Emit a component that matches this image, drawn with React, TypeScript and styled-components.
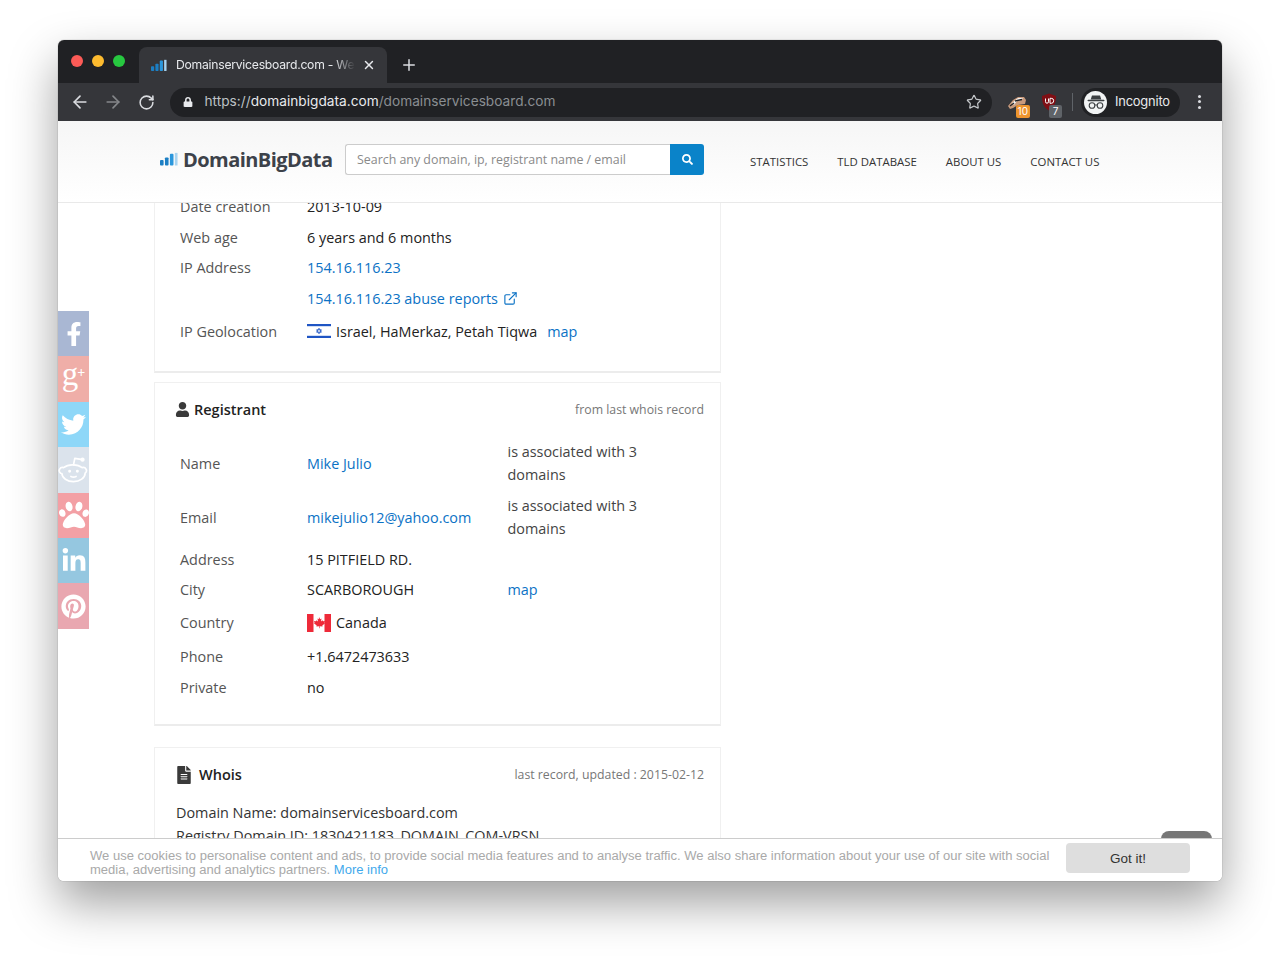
import React from 'react'
import styled, {createGlobalStyle} from 'styled-components'
import {ArrowLeft, ArrowRight, RotateCw, Star, Plus, X, ExternalLink} from 'lucide-react'
import {
    FaFacebookF, FaTwitter, FaPaw, FaLinkedinIn, FaPinterest,
    FaLock, FaSearch, FaUser, FaFileAlt
} from 'react-icons/fa'
import {TbBrandReddit} from 'react-icons/tb'

const GlobalStyle = createGlobalStyle`
  * {
    box-sizing: border-box;
  }

  html, body {
    margin: 0;
    background: #fff;
  }

  a {
    text-decoration: none;
  }
`

const BarsLogo = ({size}: { size: number }) => (
    <svg width={size} height={size * 0.8} viewBox="0 0 20 16">
        <rect x="0" y="9" width="4" height="6" rx="1" fill="#1c7fc4"/>
        <rect x="5.500" y="6" width="4" height="9" rx="1" fill="#1c7fc4"/>
        <rect x="11" y="2" width="4" height="13" rx="1" fill="#2b97dc"/>
        <rect x="16.500" y="1" width="3" height="14" fill="#a9d4f0"/>
    </svg>
)

const IsraelFlag = () => (
    <svg width="24" height="18" viewBox="0 0 24 18">
        <rect width="24" height="18" fill="#fff"/>
        <rect y="2" width="24" height="2.200" fill="#1f55c4"/>
        <rect y="13.800" width="24" height="2.200" fill="#1f55c4"/>
        <path d="M12 6.200l2.400 4H9.600zM12 11.800l-2.400-4h4.800z" fill="none" stroke="#1f55c4" strokeWidth=".8"/>
    </svg>
)

const CanadaFlag = () => (
    <svg width="24" height="18" viewBox="0 0 24 18">
        <rect width="24" height="18" fill="#fff"/>
        <rect width="6.500" height="18" fill="#ee2a39"/>
        <rect x="17.500" width="6.500" height="18" fill="#ee2a39"/>
        <path
            d="M12 3l1.200 2.200 1.300-.6-.5 3 1.600-1.400.4 1 2-.3-.6 2 .7.4-2.800 2.200.3 1.100-2.800-.4v2h-.6v-2l-2.800.4.3-1.100-2.800-2.200.7-.4-.6-2 2 .3.4-1 1.600 1.400-.5-3 1.300.6z"
            fill="#ee2a39"/>
    </svg>
)

const IncognitoFace = () => (
    <svg width="18" height="16" viewBox="0 0 18 16">
        <path d="M5 1.500h8l1.300 4H3.700z" fill="#3c4043"/>
        <rect x="0.500" y="5.800" width="17" height="1.500" rx=".7" fill="#3c4043"/>
        <circle cx="5" cy="11.500" r="2.800" fill="none" stroke="#3c4043" strokeWidth="1.100"/>
        <circle cx="13" cy="11.500" r="2.800" fill="none" stroke="#3c4043" strokeWidth="1.100"/>
        <path d="M7.800 11h2.400" stroke="#3c4043" strokeWidth="1.100"/>
    </svg>
)

const HandIcon = () => (
    <svg width="22" height="18" viewBox="0 0 22 18">
        <path d="M2 13l5-6 5-3 6 0 2 3-1 4-7 1-5 3-3 1z" fill="#c89a7c"/>
        <path d="M6 10l6-5 5 0-2 2-4 1-3 4z" fill="#f4f4f4"/>
        <path d="M9 8l7-1.500" stroke="#202124" strokeWidth="1.400"/>
        <path d="M4 13l4-3" stroke="#202124" strokeWidth="1.200"/>
    </svg>
)

const ShieldIcon = () => (
    <svg width="16" height="18" viewBox="0 0 16 18">
        <path d="M8 .5l7 2.500c0 7-1.500 11-7 14.500C2.500 14 1 10 1 3z" fill="#800f14"/>
        <path d="M4.500 5.500v3.200a1.500 1.500 0 0 0 3 0V5.500M9 5.300v5h1.200a2.500 2.500 0 0 0 0-5z" fill="none" stroke="#fff" strokeWidth="1"/>
    </svg>
)

export default function App() {
    const socials = [
        {color: '#a9b7d3', icon: <FaFacebookF size={24}/>},
        {color: '#efaea8', icon: <GoogleGlyph>g<GooglePlusSign>+</GooglePlusSign></GoogleGlyph>},
        {color: '#8ed7f8', icon: <FaTwitter size={25}/>},
        {color: '#dbe3ec', icon: <TbBrandReddit size={32} strokeWidth={1.300}/>},
        {color: '#f3a0a5', icon: <FaPaw size={30}/>},
        {color: '#95c7e0', icon: <FaLinkedinIn size={26}/>},
        {color: '#e9a7b0', icon: <FaPinterest size={25}/>},
    ]

    return (
        <Page>
            <GlobalStyle/>
            <BrowserWindow>
                <TitleBar>
                    <Lights>
                        <Light $color="#fc5b57"/>
                        <Light $color="#fdbb2f"/>
                        <Light $color="#27c840"/>
                    </Lights>
                    <Tab>
                        <BarsLogo size={16}/>
                        <TabTitle>Domainservicesboard.com - Welcome</TabTitle>
                        <X size={14} strokeWidth={2.500} color="#e8eaed"/>
                    </Tab>
                    <NewTab><Plus size={18} strokeWidth={2} color="#dadce0"/></NewTab>
                </TitleBar>

                <Toolbar>
                    <NavButton><ArrowLeft size={20} strokeWidth={2} color="#dadce0"/></NavButton>
                    <NavButton><ArrowRight size={20} strokeWidth={2} color="#85878a"/></NavButton>
                    <NavButton><RotateCw size={17} strokeWidth={2.200} color="#dadce0"/></NavButton>
                    <Omnibox>
                        <FaLock size={10} color="#e8eaed"/>
                        <UrlText>
                            <UrlScheme>https://</UrlScheme>domainbigdata.com<UrlMuted>/domainservicesboard.com</UrlMuted>
                        </UrlText>
                        <Star size={16} strokeWidth={1.800} color="#c4c7ca"/>
                    </Omnibox>
                    <Extension>
                        <HandIcon/>
                        <ExtensionBadge $color="#ee952e">10</ExtensionBadge>
                    </Extension>
                    <Extension>
                        <ShieldIcon/>
                        <ExtensionBadge $color="#5f6368">7</ExtensionBadge>
                    </Extension>
                    <ToolbarDivider/>
                    <ProfilePill>
                        <ProfileAvatar><IncognitoFace/></ProfileAvatar>
                        <ProfileName>Incognito</ProfileName>
                    </ProfilePill>
                    <MenuDots>
                        <Dot/>
                        <Dot/>
                        <Dot/>
                    </MenuDots>
                </Toolbar>

                <Viewport>
                    <SiteHeader>
                        <LogoBlock>
                            <BarsLogo size={18}/>
                            <LogoText>DomainBigData</LogoText>
                        </LogoBlock>
                        <SearchForm>
                            <SearchField>Search any domain, ip, registrant name / email</SearchField>
                            <SearchButton><FaSearch size={11}/></SearchButton>
                        </SearchForm>
                        <SiteNav>
                            <NavLink>Statistics</NavLink>
                            <NavLink>TLD Database</NavLink>
                            <NavLink>About us</NavLink>
                            <NavLink>Contact us</NavLink>
                        </SiteNav>
                    </SiteHeader>

                    <Scroller>
                        <Card $top={-13} $pad={23}>
                            <DataRow $h={31}><Label>Date creation</Label><Value>2013-10-09</Value></DataRow>
                            <DataRow $h={30}><Label>Web age</Label><Value>6 years and 6 months</Value></DataRow>
                            <DataRow $h={31}><Label>IP Address</Label><LinkValue>154.16.116.23</LinkValue></DataRow>
                            <DataRow $h={31}>
                                <Label/>
                                <LinkValue>154.16.116.23 abuse reports <ExternalLink size={15} strokeWidth={1.800}/></LinkValue>
                            </DataRow>
                            <DataRow $h={34}>
                                <Label>IP Geolocation</Label>
                                <Value $wide>
                                    <IsraelFlag/>
                                    <FlagName>Israel, HaMerkaz, Petah Tiqwa</FlagName>
                                    <MapLink>map</MapLink>
                                </Value>
                            </DataRow>
                        </Card>

                        <Card $top={9} $pad={21}>
                            <CardHead>
                                <CardTitle><FaUser size={15}/>Registrant</CardTitle>
                                <CardNote>from last whois record</CardNote>
                            </CardHead>
                            <DataRow $h={54}>
                                <Label>Name</Label>
                                <LinkValue>Mike Julio</LinkValue>
                                <Note>is associated with 3 domains</Note>
                            </DataRow>
                            <DataRow $h={54}>
                                <Label>Email</Label>
                                <LinkValue>mikejulio12@yahoo.com</LinkValue>
                                <Note>is associated with 3 domains</Note>
                            </DataRow>
                            <DataRow $h={30}><Label>Address</Label><Value>15 PITFIELD RD.</Value></DataRow>
                            <DataRow $h={31}>
                                <Label>City</Label>
                                <Value>SCARBOROUGH</Value>
                                <LinkValue>map</LinkValue>
                            </DataRow>
                            <DataRow $h={35}>
                                <Label>Country</Label>
                                <Value><CanadaFlag/><FlagName>Canada</FlagName></Value>
                            </DataRow>
                            <DataRow $h={32}><Label>Phone</Label><Value>+1.6472473633</Value></DataRow>
                            <DataRow $h={31}><Label>Private</Label><Value>no</Value></DataRow>
                        </Card>

                        <Card $top={21} $pad={0}>
                            <CardHead $h={53}>
                                <CardTitle $gap={6}><FaFileAlt size={18}/>Whois</CardTitle>
                                <CardNote>last record, updated : 2015-02-12</CardNote>
                            </CardHead>
                            <WhoisText>
                                Domain Name: domainservicesboard.com<br/>
                                Registry Domain ID: 1830421183_DOMAIN_COM-VRSN<br/>
                                Registrar WHOIS Server: whois.namecheap.com
                            </WhoisText>
                        </Card>
                    </Scroller>

                    <SocialRail>
                        {socials.map((s, i) => <SocialItem key={i} $color={s.color}>{s.icon}</SocialItem>)}
                    </SocialRail>

                    <ScrollTop/>

                    <CookieBar>
                        <CookieText>
                            We use cookies to personalise content and ads, to provide social media features and to
                            analyse traffic. We also share information about your use of our site with social
                            media, advertising and analytics partners. <CookieLink>More info</CookieLink>
                        </CookieText>
                        <CookieButton>Got it!</CookieButton>
                    </CookieBar>
                </Viewport>
            </BrowserWindow>
        </Page>
    )
}

const GoogleGlyph = styled.span`
  margin-top: -9px;
  font-family: "Liberation Serif", serif;
  font-size: 33px;
  line-height: 1;
`

const GooglePlusSign = styled.span`
  position: relative;
  top: -8px;
  margin-left: -1px;
  font-size: 14px;
  font-weight: 700;
`

const Page = styled.div`
  width: 1280px;
  height: 958px;
  padding: 40px 58px 77px;
  overflow: hidden;
`

const BrowserWindow = styled.div`
  height: 841px;
  display: flex;
  flex-direction: column;
  border-radius: 6px;
  overflow: hidden;
  box-shadow: 0 22px 48px rgba(0, 0, 0, .38), 0 0 1px rgba(0, 0, 0, .6);
  font-family: "Inter", "Liberation Sans", sans-serif;
`

const TitleBar = styled.div`
  height: 43px;
  flex: none;
  display: flex;
  align-items: flex-end;
  background: #202124;
`

const Lights = styled.div`
  display: flex;
  gap: 9px;
  align-self: center;
  margin: -2px 0 0 13px;
`

const Light = styled.span<{ $color: string }>`
  width: 12px;
  height: 12px;
  border-radius: 50%;
  background: ${props => props.$color};
`

const Tab = styled.div`
  width: 248px;
  height: 36px;
  margin-left: 14px;
  padding: 0 11px 0 12px;
  display: flex;
  align-items: center;
  background: #35363a;
  border-radius: 8px 8px 0 0;
`

const TabTitle = styled.span`
  width: 180px;
  margin: -1px 7px 0 9px;
  overflow: hidden;
  white-space: nowrap;
  font-size: 12.200px;
  letter-spacing: -.25px;
  color: #e8eaed;
  mask-image: linear-gradient(to right, #000 88%, transparent 100%);
`

const NewTab = styled.div`
  height: 36px;
  margin-left: 13px;
  display: flex;
  align-items: center;
`

const Toolbar = styled.div`
  height: 38px;
  flex: none;
  padding: 0 4px 0 5px;
  display: flex;
  align-items: center;
  background: #35363a;
`

const NavButton = styled.div`
  width: 33.500px;
  display: flex;
  justify-content: center;
`

const Omnibox = styled.div`
  flex: 1;
  height: 29px;
  margin: 0 9px 0 6px;
  padding: 0 10px 0 13px;
  display: flex;
  align-items: center;
  background: #202124;
  border-radius: 15px;
`

const UrlText = styled.span`
  flex: 1;
  margin: -2px 0 0 12px;
  font-size: 13.700px;
  color: #e8eaed;
`

const UrlScheme = styled.span`
  color: #bdc1c6;
`

const UrlMuted = styled.span`
  color: #8a8e92;
`

const Extension = styled.div`
  position: relative;
  width: 32px;
  display: flex;
  justify-content: center;
`

const ExtensionBadge = styled.span<{ $color: string }>`
  position: absolute;
  right: 3px;
  bottom: -7px;
  min-width: 13px;
  height: 13px;
  padding: 0 2px;
  border-radius: 2px;
  background: ${props => props.$color};
  color: #fff;
  font-size: 10px;
  line-height: 13px;
  text-align: center;
`

const ToolbarDivider = styled.div`
  width: 1px;
  height: 18px;
  margin-left: 7px;
  background: #5f6368;
`

const ProfilePill = styled.div`
  width: 99px;
  height: 29px;
  margin-left: 8px;
  padding-left: 3px;
  display: flex;
  align-items: center;
  gap: 8px;
  background: #202124;
  border-radius: 15px;
`

const ProfileAvatar = styled.div`
  width: 23px;
  height: 23px;
  display: flex;
  align-items: center;
  justify-content: center;
  border-radius: 50%;
  background: #f1f3f4;
`

const ProfileName = styled.span`
  margin-top: -1px;
  font-size: 12.900px;
  letter-spacing: -.2px;
  color: #e8eaed;
`

const MenuDots = styled.div`
  width: 38px;
  margin-top: -1px;
  display: flex;
  flex-direction: column;
  align-items: center;
  gap: 2.500px;
`

const Dot = styled.span`
  width: 3px;
  height: 3px;
  border-radius: 50%;
  background: #dadce0;
`

const Viewport = styled.div`
  position: relative;
  flex: 1;
  min-height: 0;
  display: flex;
  flex-direction: column;
  background: #fff;
  font-family: "Open Sans", "Liberation Sans", sans-serif;
`

const SiteHeader = styled.header`
  position: relative;
  z-index: 1;
  height: 82px;
  flex: none;
  padding-left: 102px;
  display: flex;
  align-items: center;
  background: linear-gradient(#f6f6f6, #fff);
  border-bottom: 1px solid #e9e9e9;
`

const LogoBlock = styled.div`
  width: 185px;
  margin-top: -4px;
  display: flex;
  align-items: center;
  gap: 5px;
`

const LogoText = styled.span`
  font-size: 20px;
  font-weight: 700;
  letter-spacing: -.55px;
  color: #3d424a;
`

const SearchForm = styled.div`
  width: 359px;
  height: 31px;
  margin-top: -4px;
  display: flex;
`

const SearchField = styled.div`
  flex: 1;
  padding-left: 11px;
  border: 1px solid #ccc;
  border-right: 0;
  border-radius: 3px 0 0 3px;
  background: #fff;
  font-size: 12.400px;
  line-height: 29px;
  color: #8a8a8a;
`

const SearchButton = styled.div`
  width: 34px;
  display: flex;
  align-items: center;
  justify-content: center;
  background: #0a83c9;
  border-radius: 0 3px 3px 0;
  color: #fff;
`

const SiteNav = styled.nav`
  margin-left: 46px;
  display: flex;
  gap: 29px;
`

const NavLink = styled.a`
  font-size: 11.400px;
  text-transform: uppercase;
  color: #333;
`

const Scroller = styled.main`
  flex: 1;
  min-height: 0;
  overflow: hidden;
  padding-left: 96px;
`

const Card = styled.section<{ $top: number, $pad: number }>`
  width: 567px;
  margin-top: ${props => props.$top}px;
  padding: 0 16px ${props => props.$pad}px 25px;
  background: #fff;
  border: 1px solid #f0f0f0;
  border-bottom: 2px solid #ececec;
`

const CardHead = styled.div<{ $h?: number }>`
  height: ${props => props.$h ?? 53}px;
  margin-left: -4px;
  display: flex;
  align-items: center;
  justify-content: space-between;
`

const CardTitle = styled.h3<{ $gap?: number }>`
  margin: 0;
  display: flex;
  align-items: center;
  gap: ${props => props.$gap ?? 4}px;
  font-size: 14.500px;
  font-weight: 600;
  color: #222;

  svg {
    margin-left: -1px;
    color: #3a3a3a;
  }
`

const CardNote = styled.span`
  font-size: 12.300px;
  color: #777;
`

const DataRow = styled.div<{ $h: number }>`
  height: ${props => props.$h}px;
  display: grid;
  grid-template-columns: 127px 200.500px 1fr;
  align-items: center;
  font-size: 14.400px;
  line-height: 23px;
`

const Label = styled.span`
  color: #555;
`

const Value = styled.span<{ $wide?: boolean }>`
  display: flex;
  align-items: center;
  white-space: nowrap;
  color: #222;
  ${props => props.$wide ? 'grid-column: span 2;' : ''}
`

const LinkValue = styled.a`
  display: flex;
  align-items: center;
  gap: 5px;
  white-space: nowrap;
  color: #0b72c5;

  svg {
    flex: none;
  }
`

const MapLink = styled.a`
  margin: 1px 0 0 10px;
  color: #0b72c5;
`

const FlagName = styled.span`
  margin-left: 5px;
`

const Note = styled.span`
  max-width: 170px;
  color: #444;
`

const WhoisText = styled.p`
  margin: 0 0 0 -4px;
  font-size: 14.400px;
  line-height: 23px;
  color: #333;
`

const SocialRail = styled.aside`
  position: absolute;
  z-index: 2;
  top: 190px;
  left: 0;
  width: 31px;
  display: flex;
  flex-direction: column;
`

const SocialItem = styled.a<{ $color: string }>`
  height: 45.400px;
  display: flex;
  align-items: center;
  justify-content: center;
  overflow: hidden;
  background: ${props => props.$color};
  color: #fff;
`

const ScrollTop = styled.div`
  position: absolute;
  z-index: 2;
  right: 10px;
  bottom: 42px;
  width: 51px;
  height: 8px;
  background: #777;
  border-radius: 8px 8px 0 0;
`

const CookieBar = styled.div`
  position: absolute;
  z-index: 3;
  right: 0;
  bottom: 0;
  left: 0;
  height: 43px;
  padding: 4px 32px 0;
  display: flex;
  gap: 14px;
  background: #fff;
  border-top: 1px solid #ccc;
  font-family: "Liberation Sans", sans-serif;
`

const CookieText = styled.p`
  flex: 1;
  margin: 6px 0 0;
  font-size: 13.030px;
  line-height: 13.500px;
  color: #a9a9a9;
`

const CookieLink = styled.a`
  color: #3fa9ec;
`

const CookieButton = styled.button`
  width: 124px;
  height: 30px;
  flex: none;
  border: 0;
  border-radius: 4px;
  background: #dedede;
  font-family: inherit;
  font-size: 13.500px;
  color: #333;
`
